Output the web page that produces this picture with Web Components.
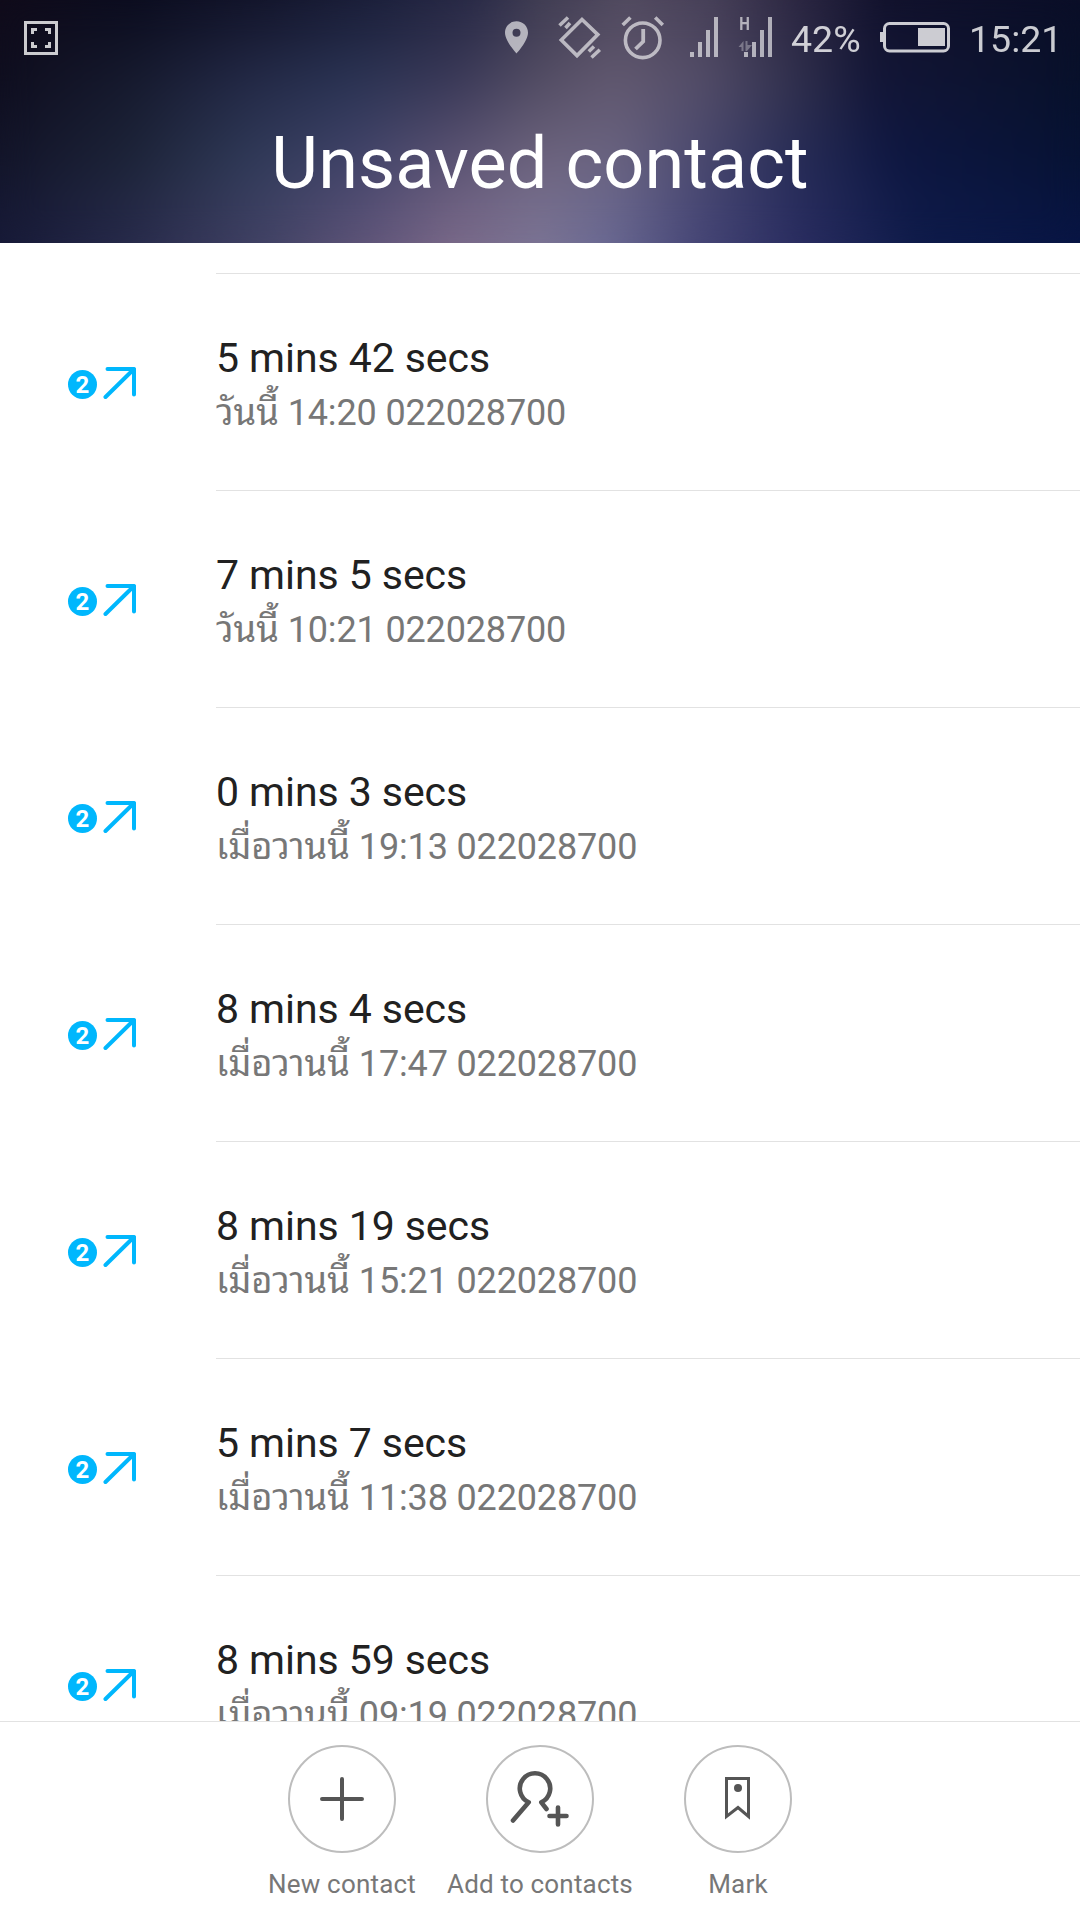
<!DOCTYPE html>
<html lang="en">
<head>
<meta charset="utf-8">
<title>Unsaved contact</title>
<style>
  body {
    margin: 0;
    background-color: #fff;
    font-family: Roboto, "Noto Sans Thai Looped", "Noto Sans Thai", "Noto Sans", sans-serif;
  }
</style>
</head>
<body>
<call-history-app>
  <status-bar slot="header" percent="42%" time="15:21"></status-bar>
  <span slot="title">Unsaved contact</span>

  <call-item sim="2" duration="5 mins 42 secs" day="วันนี้">14:20 022028700</call-item>
  <call-item sim="2" duration="7 mins 5 secs" day="วันนี้">10:21 022028700</call-item>
  <call-item sim="2" duration="0 mins 3 secs" day="เมื่อวานนี้">19:13 022028700</call-item>
  <call-item sim="2" duration="8 mins 4 secs" day="เมื่อวานนี้">17:47 022028700</call-item>
  <call-item sim="2" duration="8 mins 19 secs" day="เมื่อวานนี้">15:21 022028700</call-item>
  <call-item sim="2" duration="5 mins 7 secs" day="เมื่อวานนี้">11:38 022028700</call-item>
  <call-item sim="2" duration="8 mins 59 secs" day="เมื่อวานนี้">09:19 022028700</call-item>

  <action-button slot="actions" label="New contact">
    <svg width="108" height="108" viewBox="0 0 108 108" fill="none" stroke="#555" stroke-width="4" stroke-linecap="round">
      <path d="M34 54H74M54 34V74"/>
    </svg>
  </action-button>
  <action-button slot="actions" label="Add to contacts">
    <svg width="108" height="108" viewBox="0 0 108 108" fill="none" stroke="#555" stroke-width="4.600" stroke-linecap="round" stroke-linejoin="round">
      <path d="M27 75.500L42.700 57.300A15.200 15.200 0 1 1 55.300 57.300L60.500 64"/>
      <path d="M63.500 71H80.500M72 62.500V79.500"/>
    </svg>
  </action-button>
  <action-button slot="actions" label="Mark">
    <svg width="108" height="108" viewBox="0 0 108 108" fill="none" stroke="#555" stroke-width="3">
      <path d="M42.500 33.500H64.500V71.500L54 62.500L42.500 71.500Z"/>
      <circle cx="54" cy="43" r="4" fill="#555" stroke="none"/>
    </svg>
  </action-button>
</call-history-app>

<script>
const templateStatusBar = document.createElement('template');
templateStatusBar.innerHTML = /*html*/`
  <style>
    :host {
      display: flex;
      height: 76px;
      color: rgba(255, 255, 255, .79);
      font-size: 37.5px;
      line-height: 79px;
      white-space: nowrap;
    }
    svg {
      display: block;
      flex: none;
      height: 76px;
      color: #fff;
    }
    .dim { opacity: .61; }
    .lit { opacity: .79; }
    .capture { margin-left: 24px; margin-right: auto; }
    .pin { margin-right: 28px; }
    .vibrate { margin-right: 19px; }
    .alarm { margin-right: 24px; }
    .sim1 { margin-right: 20px; }
    .sim2 { margin-right: 19px; }
    .percent { width: 89px; }
    .battery { margin-right: 19px; }
    .time { width: 111px; }
  </style>
  <svg class="capture lit" width="34" viewBox="24 0 34 76" fill="none" stroke="currentColor" stroke-width="3">
    <path d="M25.500 22.500H56.500V53.500H25.500Z"/>
    <path d="M32.500 34V29.500H37M45 29.500H49.500V34M49.500 42V46.500H45M37 46.500H32.500V42"/>
  </svg>
  <svg class="pin dim" width="24" viewBox="505 0 24 76" fill="currentColor" fill-rule="evenodd">
    <path d="M516.500 21.300C510 21.300 505 26.300 505 32.700C505 41 516.500 53.500 516.500 53.500S528 41 528 32.700C528 26.300 523 21.300 516.500 21.300ZM516.500 28.700A4 4 0 1 1 516.500 36.700A4 4 0 1 1 516.500 28.700Z"/>
  </svg>
  <svg class="vibrate dim" width="45" viewBox="557 0 45 76" fill="none" stroke="currentColor" stroke-width="3.600">
    <path d="M582 19.500L597.800 34.600L577 55.600L561.300 40Z"/>
    <path d="M559.500 25.500L568 17.500M565.500 28L570 23M588.800 51.500L594 46.500M591.500 57.500L599.800 49.800"/>
  </svg>
  <svg class="alarm dim" width="45" viewBox="621 0 45 76" fill="none" stroke="currentColor" stroke-width="3.600">
    <circle cx="642.700" cy="40.300" r="17.300"/>
    <path d="M622.700 25L630.400 17.500M655.200 17.500L662.800 25"/>
    <path d="M643.200 29V41.500L635.500 49" stroke-width="3.800"/>
  </svg>
  <svg class="sim1 dim" width="28" viewBox="690 0 28 76" fill="currentColor">
    <path d="M690 52h4v5h-4zM698 42h4v15h-4zM706 30h4v27h-4zM714 17h4v40h-4z"/>
  </svg>
  <svg class="sim2 dim" width="34" viewBox="738 0 34 76" fill="currentColor">
    <path d="M744 52h4v5h-4zM752 42h4v15h-4zM760 30h4v27h-4zM768 17h4v40h-4z"/>
    <path d="M738.500 47L743.500 41V51H741.500V47ZM745.500 41H747.500V45H752L747 51H745.500Z" opacity=".5"/>
    <text x="739.200" y="30" font-size="18" font-weight="700" textLength="10.600" lengthAdjust="spacingAndGlyphs">H</text>
  </svg>
  <span class="percent"></span>
  <svg class="battery lit" width="70" viewBox="880 0 70 76" fill="none" stroke="currentColor" stroke-width="3">
    <rect x="884.500" y="23.500" width="64" height="27.500" rx="5"/>
    <path d="M880 32h3v10h-3zM918 28h27v18h-27z" fill="currentColor" stroke="none"/>
  </svg>
  <span class="time"></span>
`

class StatusBar extends HTMLElement {
  constructor() {
    super()

    this.attachShadow({ mode: 'open' })
    this.shadowRoot.appendChild(templateStatusBar.content.cloneNode(true))

    this.shadowRoot.querySelector('.percent').textContent = this.getAttribute('percent');
    this.shadowRoot.querySelector('.time').textContent = this.getAttribute('time');
  }
}

const templateCallItem = document.createElement('template');
templateCallItem.innerHTML = /*html*/`
  <style>
    :host {
      display: flex;
      height: 217px;
    }
    .call {
      box-sizing: border-box;
      flex: none;
      display: flex;
      align-items: flex-start;
      width: 216px;
      padding: 92px 0 0 68px;
    }
    .sim {
      width: 29px;
      height: 29px;
      margin-top: 4px;
      margin-right: 6px;
      border-radius: 50%;
      background-color: #00b7fd;
      color: #fff;
      font-size: 24px;
      line-height: 30px;
      font-weight: 700;
      text-align: center;
    }
    .info {
      flex: 1;
      border-bottom: 1px solid #e2e2e2;
      white-space: nowrap;
    }
    p {
      margin: 0;
    }
    .duration {
      height: 54px;
      padding-top: 60px;
      color: #212121;
      font-size: 41px;
      line-height: 49px;
      letter-spacing: -.06px;
    }
    .when {
      color: #777;
      font-size: 36px;
      line-height: 50px;
      letter-spacing: -.15px;
    }
    .day {
      font-size: 36.4px;
      line-height: 1;
      letter-spacing: 0;
    }
  </style>
  <div class="call">
    <span class="sim"></span>
    <svg width="34" height="34" viewBox="103 366 34 34" fill="none" stroke="#00b7fd" stroke-width="4" stroke-linecap="round" stroke-linejoin="round">
      <path d="M107.500 369H134V394.500M134 369L105.500 397"/>
    </svg>
  </div>
  <div class="info">
    <p class="duration"></p>
    <p class="when"><span class="day"></span> <slot></slot></p>
  </div>
`

class CallItem extends HTMLElement {
  constructor() {
    super()

    this.attachShadow({ mode: 'open' })
    this.shadowRoot.appendChild(templateCallItem.content.cloneNode(true))

    this.shadowRoot.querySelector('.sim').textContent = this.getAttribute('sim');
    this.shadowRoot.querySelector('.duration').textContent = this.getAttribute('duration');
    this.shadowRoot.querySelector('.day').textContent = this.getAttribute('day');
  }
}

const templateActionButton = document.createElement('template');
templateActionButton.innerHTML = /*html*/`
  <style>
    :host {
      display: flex;
      flex-direction: column;
      align-items: center;
      width: 198px;
    }
    .circle {
      box-sizing: border-box;
      display: flex;
      justify-content: center;
      align-items: center;
      width: 108px;
      height: 108px;
      border: 2px solid #bdbdbd;
      border-radius: 50%;
    }
    ::slotted(svg) {
      flex: none;
    }
    .label {
      margin-top: 16px;
      color: #777;
      font-size: 26px;
      line-height: 30px;
      letter-spacing: .18px;
      white-space: nowrap;
    }
  </style>
  <div class="circle"><slot></slot></div>
  <span class="label"></span>
`

class ActionButton extends HTMLElement {
  constructor() {
    super()

    this.attachShadow({ mode: 'open' })
    this.shadowRoot.appendChild(templateActionButton.content.cloneNode(true))

    this.shadowRoot.querySelector('.label').textContent = this.getAttribute('label');
  }
}

const templateApp = document.createElement('template');
templateApp.innerHTML = /*html*/`
  <style>
    :host {
      display: flex;
      flex-direction: column;
      width: 1080px;
      height: 1920px;
      overflow: hidden;
    }
    /* the backdrop is four horizontal gradients, faded into each other downwards
       and softened by the backdrop-filter of .front */
    header {
      flex: none;
      display: grid;
      height: 243px;
    }
    header > * {
      grid-area: 1 / 1;
    }
    .g1 {
      background: linear-gradient(90deg, #100b1a, #0b0c1e 12%, #13152b 25%, #1b1f3a 35%, #292a46 44%, #3f3c52 50%, #514a5f 58%, #463f57 66%, #2b2641 74%, #12122c 82%, #0a0e27);
      -webkit-mask-image: linear-gradient(#000, transparent 33.3%);
    }
    .g2 {
      background: linear-gradient(90deg, #0f0e1f, #161a2e 12%, #232946 23%, #2a3353 32%, #3a3958 42%, #534d64 50%, #625970 57%, #534d68 65%, #33324f 73%, #131637 81%, #08112b);
      -webkit-mask-image: linear-gradient(#000 33.3%, transparent 66.6%);
    }
    .g3 {
      background: linear-gradient(90deg, #13152a, #1d2439 12%, #303a58 23%, #42446a 33%, #5c5474 42%, #6e657f 50%, #6a6482 57%, #49486f 65%, #292e59 73%, #0e1742 83%, #071335);
      -webkit-mask-image: linear-gradient(#000 66.6%, transparent);
    }
    .g4 {
      background: linear-gradient(90deg, #171a38, #282b4c 12%, #444467 25%, #64587c 35%, #7b6a8a 42%, #7c7596 50%, #6b6a94 56%, #454576 65%, #2a2d61 74%, #0f1c4b 85%, #081545);
    }
    .front {
      z-index: 1;
      display: flex;
      flex-direction: column;
      -webkit-backdrop-filter: blur(18px);
      backdrop-filter: blur(18px);
    }
    h1 {
      margin: 0;
      padding-top: 46px;
      color: #fff;
      font-size: 72px;
      line-height: 84px;
      letter-spacing: .1px;
      font-weight: 400;
      text-align: center;
    }
    main {
      flex: 1;
      min-height: 0;
      overflow: hidden;
    }
    .rule {
      height: 1px;
      margin: 30px 0 0 216px;
      background-color: #e2e2e2;
    }
    footer {
      box-sizing: border-box;
      flex: none;
      display: flex;
      justify-content: center;
      height: 199px;
      padding-top: 23px;
      border-top: 1px solid #e2e2e2;
    }
  </style>
  <header>
    <div class="g4"></div>
    <div class="g3"></div>
    <div class="g2"></div>
    <div class="g1"></div>
    <div class="front">
      <slot name="header"></slot>
      <h1><slot name="title"></slot></h1>
    </div>
  </header>
  <main>
    <div class="rule"></div>
    <slot></slot>
  </main>
  <footer><slot name="actions"></slot></footer>
`

class CallHistoryApp extends HTMLElement {
  constructor() {
    super()

    this.attachShadow({ mode: 'open' })
    this.shadowRoot.appendChild(templateApp.content.cloneNode(true))
  }
}

window.customElements.define('status-bar', StatusBar);
window.customElements.define('call-item', CallItem);
window.customElements.define('action-button', ActionButton);
window.customElements.define('call-history-app', CallHistoryApp);
</script>
</body>
</html>
